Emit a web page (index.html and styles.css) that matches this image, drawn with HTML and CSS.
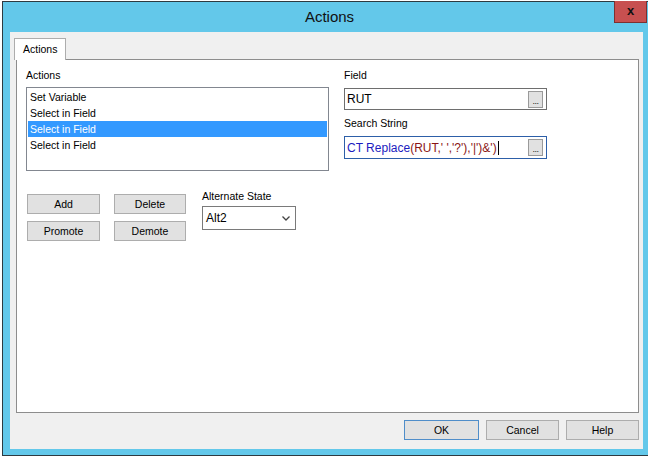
FILE: index.html
```html
<!DOCTYPE html>
<html>
<head>
<meta charset="utf-8">
<link rel="stylesheet" href="styles.css">
</head>
<body>
<div class="window">
  <div class="titlebar">
    <span class="title">Actions</span>
    <div class="close">x</div>
  </div>
  <div class="client">
    <div class="tabs"><div class="tab">Actions</div></div>
    <div class="panel">
      <div class="top-row">
        <div class="left-col">
          <div class="label">Actions</div>
          <div class="listbox">
            <div class="item">Set Variable</div>
            <div class="item">Select in Field</div>
            <div class="item selected">Select in Field</div>
            <div class="item">Select in Field</div>
          </div>
        </div>
        <div class="right-col">
          <div class="label">Field</div>
          <div class="textbox"><span class="val">RUT</span><span class="dots">...</span></div>
          <div class="label label-gap">Search String</div>
          <div class="textbox focused"><span class="val"><span class="fn">CT Replace</span><span class="arg">(RUT,' ','?'),'|')&amp;')</span><span class="caret"></span></span><span class="dots">...</span></div>
        </div>
      </div>
      <div class="bottom-row">
        <div class="btn-grid">
          <div class="btn">Add</div>
          <div class="btn">Delete</div>
          <div class="btn">Promote</div>
          <div class="btn">Demote</div>
        </div>
        <div class="alt-col">
          <div class="label">Alternate State</div>
          <div class="select"><span>Alt2</span>
            <svg width="8" height="5" viewBox="0 0 8 5"><polyline points="0.5,0.5 4,4 7.5,0.5" fill="none" stroke="#444" stroke-width="1.3"/></svg>
          </div>
        </div>
      </div>
    </div>
    <div class="footer">
      <div class="btn default">OK</div>
      <div class="btn">Cancel</div>
      <div class="btn">Help</div>
    </div>
  </div>
</div>
</body>
</html>
```
FILE: styles.css
```css
html, body { margin: 0; padding: 0; background: #ffffff; }
body { font-family: "Liberation Sans", Arial, sans-serif; font-size: 10.5px; color: #000; }

.window {
  position: relative;
  box-sizing: border-box;
  margin: 1px 0 0 2px;
  width: 646px;
  height: 455px;
  border: 1px solid #2e3a40;
  border-right: none;
  background: #63c8ea;
  padding: 0 5px 6px 7px;
}

.titlebar {
  height: 30px;
  display: flex;
  align-items: center;
  justify-content: center;
  padding-left: 6px;
}
.title { font-size: 15px; color: #111; margin-top: -2px; }

.close {
  position: absolute;
  top: -1px;
  right: 1px;
  width: 33px;
  height: 22px;
  box-sizing: border-box;
  background: #c75050;
  border: 1px solid #7d3030;
  border-top: none;
  display: flex;
  align-items: center;
  justify-content: center;
  font-weight: bold;
  font-size: 13px;
  color: #111;
  padding-bottom: 2px;
}

.client {
  background: #f0f0f0;
  height: 417px;
  box-sizing: border-box;
  padding: 6px 4px 9px 6px;
}

.tabs { display: flex; height: 22px; position: relative; z-index: 1; }
.tab {
  margin-left: -2px;
  box-sizing: border-box;
  height: 22px;
  padding: 0 8px;
  background: #fff;
  border: 1px solid #adadad;
  border-bottom: none;
  line-height: 21px;
}

.panel {
  margin-top: -1px;
  box-sizing: border-box;
  height: 354px;
  background: #fff;
  border: 1px solid #8d8d8d;
  padding: 9px 0 0 9px;
}

.label { line-height: 13px; height: 13px; white-space: nowrap; }

.top-row { display: flex; gap: 15px; }
.left-col { width: 303px; }
.left-col .label { margin-bottom: 5px; }
.listbox {
  box-sizing: border-box;
  height: 84px;
  border: 1px solid #828790;
  padding: 1px;
}
.item { line-height: 16px; height: 16px; padding-left: 2px; white-space: nowrap; }
.item.selected { background: #3399ff; color: #fff; }

.right-col { width: 203px; }
.right-col .label { margin-bottom: 6px; }
.right-col .label-gap { margin-top: 7px; }
.textbox {
  box-sizing: border-box;
  height: 22px;
  border: 1px solid #6e6e6e;
  background: #fff;
  display: flex;
  align-items: center;
  justify-content: space-between;
  padding: 0 3px 0 2px;
  font-size: 12px;
}
.textbox.focused { height: 23px; border-color: #2d5fa8; }
.val { display: flex; align-items: center; white-space: nowrap; }
.fn { color: #1c1cc0; }
.arg { color: #8a1515; }
.caret { display: inline-block; width: 1px; height: 14px; background: #000; margin-left: 1px; }
.dots {
  box-sizing: border-box;
  width: 15px;
  height: 17px;
  background: #e1e1e1;
  border: 1px solid #9a9a9a;
  font-size: 9px;
  line-height: 19px;
  text-align: center;
  color: #222;
  letter-spacing: -0.5px;
}

.bottom-row { display: flex; margin-top: 19px; gap: 16px; }
.btn-grid {
  margin-left: 1px;
  padding-top: 4px;
  display: grid;
  grid-template-columns: 73px 72px;
  grid-auto-rows: 20px;
  column-gap: 14px;
  row-gap: 7px;
}
.btn {
  box-sizing: border-box;
  background: #e1e1e1;
  border: 1px solid #adadad;
  display: flex;
  align-items: center;
  justify-content: center;
  white-space: nowrap;
}
.alt-col .label { margin-bottom: 3px; }
.select {
  box-sizing: border-box;
  width: 94px;
  height: 24px;
  border: 1px solid #7a7a7a;
  background: #fff;
  display: flex;
  align-items: center;
  justify-content: space-between;
  padding: 0 5px 0 3px;
  font-size: 12px;
}

.footer {
  margin-top: 7px;
  display: flex;
  justify-content: flex-end;
  gap: 7px;
}
.footer .btn { width: 73px; height: 20px; }
.footer .btn.default { width: 75px; border-color: #4f8dc9; }
```
